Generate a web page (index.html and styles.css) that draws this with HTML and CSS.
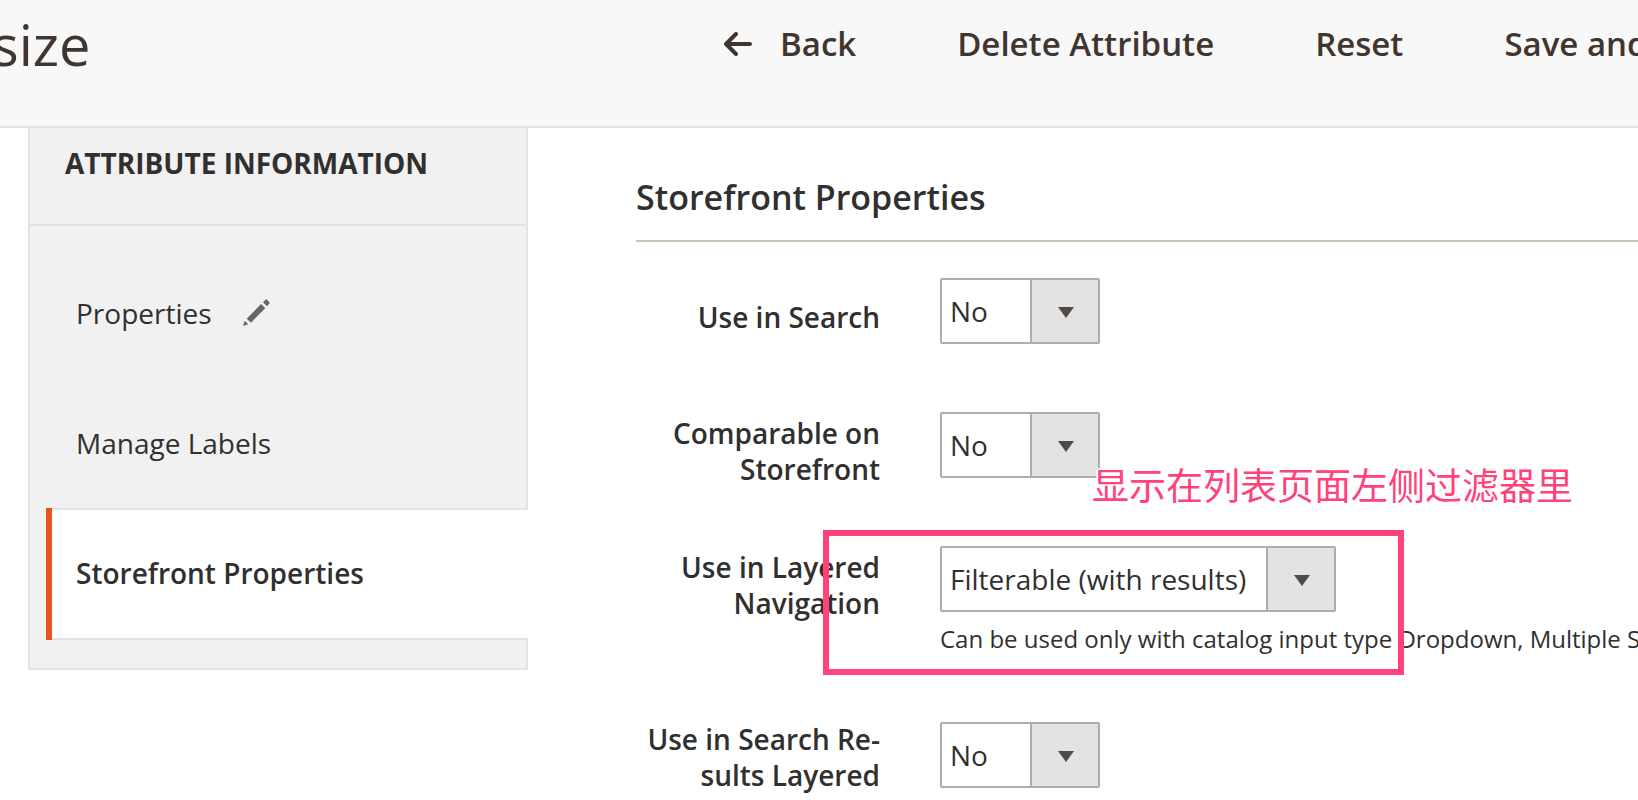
FILE: index.html
```html
<!DOCTYPE html>
<html lang="en">
<head>
    <meta charset="UTF-8">
    <meta name="viewport" content="width=device-width, initial-scale=1.0">
    <title>size</title>
    <link rel="stylesheet" href="styles.css">
</head>
<body>
    <header class="page-header">
        <h1 class="page-title">size</h1>
        <div class="page-actions">
            <button type="button" class="action back">
                <svg class="arrow" width="28" height="24" viewBox="0 0 28 24" aria-hidden="true">
                    <path d="M2 12H26M12 2L2 12L12 22" fill="none" stroke="currentColor" stroke-width="4" stroke-linecap="round" stroke-linejoin="round"/>
                </svg>
                Back
            </button>
            <button type="button" class="action">Delete Attribute</button>
            <button type="button" class="action">Reset</button>
            <button type="button" class="action">Save and Continue Edit</button>
        </div>
    </header>
    <div class="page-content">
        <nav class="side">
            <h2 class="side-title">Attribute Information</h2>
            <ul class="tabs">
                <li class="tab">
                    <a href="#properties">Properties
                        <svg class="pencil" width="28" height="28" viewBox="0 0 28 28" aria-hidden="true">
                            <path d="M23.3 0L27 4L24 7.3L20 3.3ZM18 5L22.3 9L8 23.7L3.7 19.7ZM1.7 21.7L5.3 25.3L0 27Z" fill="#666"/>
                        </svg>
                    </a>
                </li>
                <li class="tab"><a href="#labels">Manage Labels</a></li>
                <li class="tab active"><a href="#front">Storefront Properties</a></li>
            </ul>
        </nav>
        <main class="main" id="front">
            <h2 class="section-title">Storefront Properties</h2>
            <form class="fields">
                <div class="field">
                    <label for="search">Use in Search</label>
                    <div class="control">
                        <span class="select">
                            <select id="search" name="search">
                                <option>No</option>
                                <option>Yes</option>
                            </select>
                        </span>
                    </div>
                </div>
                <div class="field">
                    <label for="comparable">Comparable on Storefront</label>
                    <div class="control">
                        <span class="select">
                            <select id="comparable" name="comparable">
                                <option>No</option>
                                <option>Yes</option>
                            </select>
                        </span>
                    </div>
                </div>
                <div class="field">
                    <label for="layered">Use in Layered Navigation</label>
                    <div class="control">
                        <span class="select">
                            <select id="layered" name="layered">
                                <option>Filterable (with results)</option>
                                <option>No</option>
                            </select>
                        </span>
                        <p class="note">Can be used only with catalog input type Dropdown, Multiple Select and Price.</p>
                    </div>
                    <div class="mark"></div>
                    <p class="mark-text" lang="zh-CN">显示在列表页面左侧过滤器里</p>
                </div>
                <div class="field">
                    <label for="results">Use in Search Re&shy;sults Layered Navigation</label>
                    <div class="control">
                        <span class="select">
                            <select id="results" name="results">
                                <option>No</option>
                                <option>Yes</option>
                            </select>
                        </span>
                    </div>
                </div>
            </form>
        </main>
    </div>
</body>
</html>
```
FILE: styles.css
```css
*
{
    box-sizing: border-box;
}
body
{
    margin: 0;
    height: 100vh;
    overflow: hidden;
    background: #fff;
    color: #303030;
    font-family: "Open Sans", "Noto Sans", sans-serif;
    font-size: 28px;
    line-height: 38px;
}
h1, h2, p, ul
{
    margin: 0;
    padding: 0;
}

/* header */
.page-header
{
    display: flex;
    height: 128px;
    background: #f8f8f8;
    border-bottom: 2px solid #e3e3e3;
    color: #41362f;
}
.page-title
{
    flex: 0 0 732px;
    margin-left: -8px;
    padding-top: 6px;
    font-size: 56px;
    font-weight: 400;
    line-height: 76px;
}
.page-actions
{
    display: flex;
    align-items: flex-start;
    gap: 101px;
    padding-top: 22px;
}
.action
{
    display: flex;
    align-items: center;
    gap: 28px;
    padding: 0;
    border: 0;
    background: none;
    color: inherit;
    font-family: inherit;
    font-size: 33px;
    font-weight: 600;
    line-height: 44px;
    white-space: nowrap;
    cursor: pointer;
}

/* left tabs */
.page-content
{
    display: flex;
    align-items: flex-start;
    gap: 108px;
    padding-left: 28px;
}
.side
{
    flex: 0 0 500px;
    background: #f1f1f1;
    border: 2px solid #e3e3e3;
    border-top: 0;
}
.side-title
{
    padding: 16px 35px 42px;
    border-bottom: 2px solid #e3e3e3;
    font-size: 28px;
    font-weight: 700;
    text-transform: uppercase;
}
.tabs
{
    padding: 24px 0 28px 16px;
    list-style: none;
}
.tab
{
    position: relative;
    margin-top: -2px;
    border: solid transparent;
    border-width: 2px 0;
}
.tab a
{
    display: flex;
    align-items: center;
    gap: 31px;
    padding: 44px 30px 46px;
    color: inherit;
    text-decoration: none;
}
.tab.active
{
    margin-right: -2px;
    background: #fff;
    border-color: #e3e3e3;
    font-weight: 600;
}
.tab.active::before
{
    content: "";
    position: absolute;
    top: -2px;
    bottom: -2px;
    left: 0;
    width: 6px;
    background: #eb5320;
}

/* form */
.main
{
    flex: 1;
    min-width: 0;
    padding-top: 46px;
}
.section-title
{
    margin-bottom: 35px;
    padding-bottom: 20px;
    border-bottom: 2px solid #cac3b4;
    font-size: 34px;
    font-weight: 600;
    line-height: 46px;
}
.fields
{
    display: flex;
    flex-direction: column;
    gap: 54px;
}
.field
{
    position: relative;
    display: flex;
    align-items: flex-start;
    gap: 60px;
}
.field label
{
    display: flex;
    flex: 0 0 244px;
    flex-direction: column;
    justify-content: center;
    min-height: 80px;
    font-weight: 600;
    line-height: 36px;
    text-align: right;
}
.control
{
    flex: 1;
    min-width: 0;
    padding-top: 1px;
}
.select
{
    position: relative;
    display: inline-block;
    vertical-align: top;
}
.select::after
{
    content: "";
    position: absolute;
    top: 29px;
    right: 26px;
    border: solid transparent;
    border-width: 11px 8px 0;
    border-top-color: #514943;
    pointer-events: none;
}
.select select
{
    display: block;
    appearance: none;
    min-width: 160px;
    height: 66px;
    padding: 0 87px 0 8px;
    border: 2px solid #adadad;
    border-radius: 2px;
    background: linear-gradient(to right, #adadad 2px, #e3e3e3 2px) right / 68px 100% no-repeat #fff;
    color: inherit;
    font-family: inherit;
    font-size: 28px;
}
.note
{
    margin: 10px 0 11px;
    font-size: 24px;
    line-height: 34px;
    white-space: nowrap;
}

/* callout over the field */
.mark
{
    position: absolute;
    top: -15px;
    left: 187px;
    width: 581px;
    height: 145px;
    border: 6px solid #ff4279;
    pointer-events: none;
}
.mark-text
{
    position: absolute;
    top: -88px;
    left: 456px;
    color: #ff4279;
    font-family: "Noto Sans CJK SC", sans-serif;
    font-size: 37px;
    font-weight: 400;
    line-height: 54px;
    text-shadow: 0 0 2px #fff, 2px 0 #fff, -2px 0 #fff, 0 2px #fff, 0 -2px #fff;
    white-space: nowrap;
}
```
